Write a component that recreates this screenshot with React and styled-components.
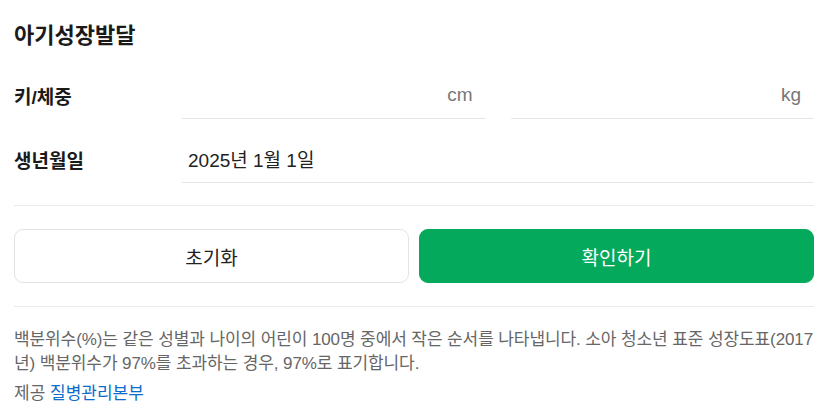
import React from 'react'
import styled, { createGlobalStyle } from 'styled-components'

const Global = createGlobalStyle`
    body{
        margin:0;
        background:#fff;
        font-family:"Liberation Sans","Noto Sans CJK KR",sans-serif;
        color:#222;
    }
`
const Container = styled.div`
    width:800px;
    padding:0 14px;
`
const Title = styled.h2`
    margin:0;
    padding-top:21px;
    font-size:22px;
    line-height:30px;
    font-weight:700;
    color:#1a1a1a;
`
const Row = styled.div`
    display:flex;
    align-items:center;
    height:48px;
    margin-top:${p => p.first ? '20px' : '16px'};
`
const Label = styled.div`
    width:168px;
    flex:none;
    font-size:19px;
    font-weight:700;
    color:#1a1a1a;
`
const Fields = styled.div`
    flex:1;
    display:flex;
    gap:25px;
    height:100%;
`
const Field = styled.div`
    flex:1;
    display:flex;
    align-items:center;
    justify-content:${p => p.unit ? 'flex-end' : 'flex-start'};
    border-bottom:1px solid #e6e6e6;
    padding:0 13px 0 6px;
    font-size:19px;
    color:${p => p.unit ? '#777' : '#222'};
`
const Divider = styled.hr`
    margin:${p => p.m};
    border:none;
    border-top:1px solid #ebebeb;
`
const Buttons = styled.div`
    display:flex;
    gap:10px;
`
const Button = styled.button`
    flex:1;
    height:54px;
    border-radius:9px;
    font-family:inherit;
    font-size:19px;
    border:1px solid ${p => p.primary ? '#05a95c' : '#e3e3e3'};
    background:${p => p.primary ? '#05a95c' : '#fff'};
    color:${p => p.primary ? '#fff' : '#222'};
`
const Note = styled.p`
    margin:21px 0 0;
    font-size:17px;
    line-height:24px;
    color:#666;
    letter-spacing:-0.1px;
    word-break:break-all;
`
const Source = styled.p`
    margin:6px 0 0;
    font-size:17px;
    line-height:24px;
    color:#666;
    a{
        color:#0b6cc9;
        text-decoration:none;
    }
`

export default () => (
    <Container>
        <Global />
        <Title>아기성장발달</Title>
        <Row first>
            <Label>키/체중</Label>
            <Fields>
                <Field unit>cm</Field>
                <Field unit>kg</Field>
            </Fields>
        </Row>
        <Row>
            <Label>생년월일</Label>
            <Fields>
                <Field>2025년 1월 1일</Field>
            </Fields>
        </Row>
        <Divider m="22px 0 23px" />
        <Buttons>
            <Button>초기화</Button>
            <Button primary>확인하기</Button>
        </Buttons>
        <Divider m="23px 0 0" />
        <Note>백분위수(%)는 같은 성별과 나이의 어린이 100명 중에서 작은 순서를 나타냅니다. 소아 청소년 표준 성장도표(2017년) 백분위수가 97%를 초과하는 경우, 97%로 표기합니다.</Note>
        <Source>제공 <a href="#">질병관리본부</a></Source>
    </Container>
)
